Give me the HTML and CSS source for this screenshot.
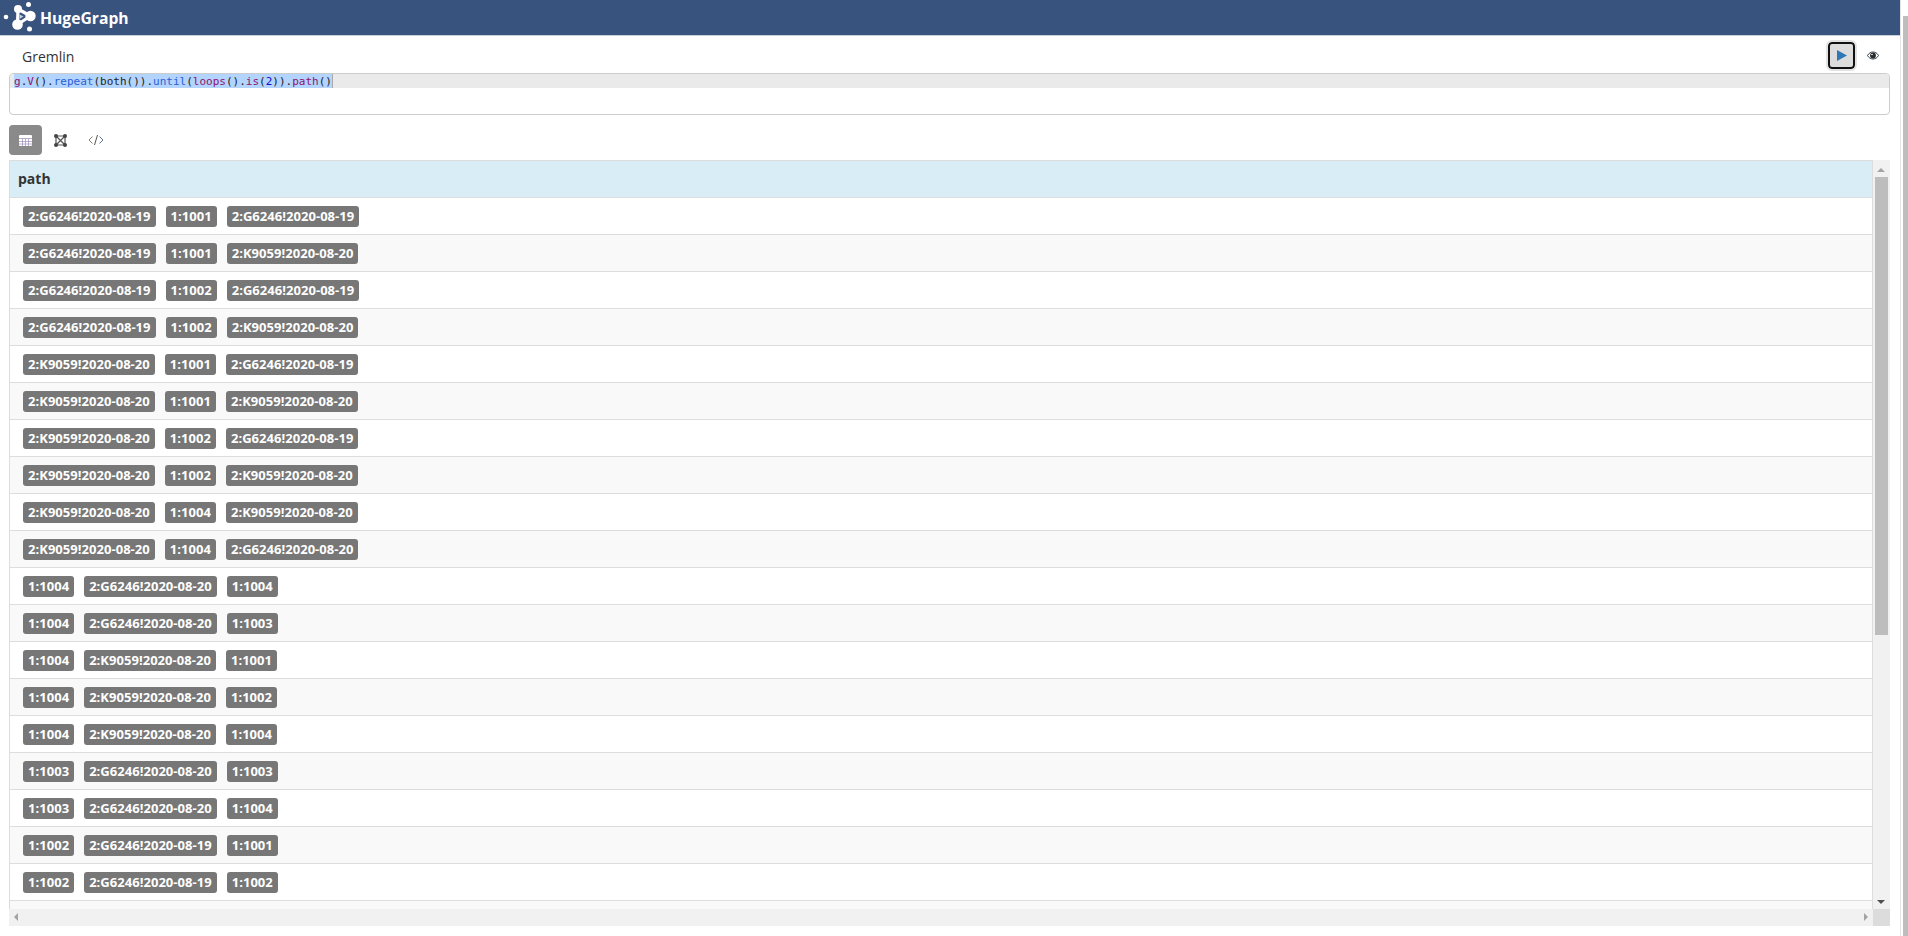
FILE: index.html
```html
<!DOCTYPE html>
<html lang="en">
<head>
<meta charset="utf-8">
<title>HugeGraph</title>
<link rel="stylesheet" href="styles.css">
</head>
<body>
<div class="page">
  <div class="main">
    <header class="topbar">
      <svg class="logo" viewBox="0 0 36 36" width="36" height="36">
        <g fill="#fff"><circle cx="4" cy="17" r="2.3"/><circle cx="15.500" cy="24.500" r="5.300"/><circle cx="26.500" cy="4.500" r="2.500"/><circle cx="28.500" cy="16" r="5.200"/><circle cx="27.500" cy="29" r="2.500"/><circle cx="16" cy="9" r="4"/></g>
        <path d="M16 9L28.500 16 15.500 24.500z" fill="none" stroke="#fff" stroke-width="3.200" stroke-linejoin="round"/>
        <path d="M17.500 14.500l4 2-4 2.500z" fill="#c8d0de"/>
      </svg>
      <span class="brand">HugeGraph</span>
    </header>
    <section class="query">
      <div class="query-head">
        <span class="query-title">Gremlin</span>
        <div class="query-actions">
          <button class="run"><svg viewBox="0 0 10 11" width="10" height="11"><path d="M0 0v11L10 5.500z" fill="#2d78b5"/></svg></button>
          <svg class="eye" viewBox="0 0 12 9" width="12" height="9"><path d="M.5 4.500C2 2 3.800 1 6 1s4 1 5.500 3.500C10 7 8.200 8 6 8S2 7 .5 4.500z" fill="#fff" stroke="#345" stroke-width="1"/><circle cx="6" cy="4.500" r="2.900" fill="#2a2a2a"/><circle cx="5" cy="3.500" r=".8" fill="#fff"/></svg>
        </div>
      </div>
      <div class="editor">
        <div class="code-line"><span class="sel"><span class="v">g</span>.<span class="v">V</span>().<span class="f">repeat</span>(both()).<span class="f">until</span>(<span class="v">loops</span>().<span class="v">is</span>(<span class="n">2</span>)).<span class="v">path</span>()</span><span class="cursor"></span></div>
      </div>
    </section>
    <nav class="tabs">
      <button class="tab active"><svg viewBox="0 0 13 11" width="13" height="11"><rect width="13" height="11" rx="1" fill="#fff"/><path d="M0 3.500h13M0 6.500h13M0 9h13M3.500 3v8M6.500 3v8M9.500 3v8" stroke="#a89cc0" stroke-width=".8"/></svg></button>
      <button class="tab"><svg viewBox="0 0 13 13" width="13" height="13"><g fill="none" stroke="#555"><path d="M2 2h9v9H2z" stroke-width="1.200"/><path d="M2 2l9 9M11 2l-9 9" stroke-width="1.300"/></g><g fill="#444"><circle cx="2" cy="2" r="2"/><circle cx="11" cy="2" r="2"/><circle cx="2" cy="11" r="2"/><circle cx="11" cy="11" r="2"/></g></svg></button>
      <button class="tab"><svg viewBox="0 0 16 12" width="16" height="12" fill="none" stroke-width="1"><path d="M4.500 2.500L1 6l3.500 3.500" stroke="#8a7a66"/><path d="M11.500 2.500L15 6l-3.500 3.500" stroke="#5f6f90"/><path d="M9.500 1L6.500 11" stroke="#555"/></svg></button>
    </nav>
    <section class="result">
      <div class="result-body">
        <div class="result-view">
          <div class="th">path</div>
          <div class="tr"><span class="label">2:G6246!2020-08-19</span><span class="label">1:1001</span><span class="label">2:G6246!2020-08-19</span></div>
          <div class="tr"><span class="label">2:G6246!2020-08-19</span><span class="label">1:1001</span><span class="label">2:K9059!2020-08-20</span></div>
          <div class="tr"><span class="label">2:G6246!2020-08-19</span><span class="label">1:1002</span><span class="label">2:G6246!2020-08-19</span></div>
          <div class="tr"><span class="label">2:G6246!2020-08-19</span><span class="label">1:1002</span><span class="label">2:K9059!2020-08-20</span></div>
          <div class="tr"><span class="label">2:K9059!2020-08-20</span><span class="label">1:1001</span><span class="label">2:G6246!2020-08-19</span></div>
          <div class="tr"><span class="label">2:K9059!2020-08-20</span><span class="label">1:1001</span><span class="label">2:K9059!2020-08-20</span></div>
          <div class="tr"><span class="label">2:K9059!2020-08-20</span><span class="label">1:1002</span><span class="label">2:G6246!2020-08-19</span></div>
          <div class="tr"><span class="label">2:K9059!2020-08-20</span><span class="label">1:1002</span><span class="label">2:K9059!2020-08-20</span></div>
          <div class="tr"><span class="label">2:K9059!2020-08-20</span><span class="label">1:1004</span><span class="label">2:K9059!2020-08-20</span></div>
          <div class="tr"><span class="label">2:K9059!2020-08-20</span><span class="label">1:1004</span><span class="label">2:G6246!2020-08-20</span></div>
          <div class="tr"><span class="label">1:1004</span><span class="label">2:G6246!2020-08-20</span><span class="label">1:1004</span></div>
          <div class="tr"><span class="label">1:1004</span><span class="label">2:G6246!2020-08-20</span><span class="label">1:1003</span></div>
          <div class="tr"><span class="label">1:1004</span><span class="label">2:K9059!2020-08-20</span><span class="label">1:1001</span></div>
          <div class="tr"><span class="label">1:1004</span><span class="label">2:K9059!2020-08-20</span><span class="label">1:1002</span></div>
          <div class="tr"><span class="label">1:1004</span><span class="label">2:K9059!2020-08-20</span><span class="label">1:1004</span></div>
          <div class="tr"><span class="label">1:1003</span><span class="label">2:G6246!2020-08-20</span><span class="label">1:1003</span></div>
          <div class="tr"><span class="label">1:1003</span><span class="label">2:G6246!2020-08-20</span><span class="label">1:1004</span></div>
          <div class="tr"><span class="label">1:1002</span><span class="label">2:G6246!2020-08-19</span><span class="label">1:1001</span></div>
          <div class="tr"><span class="label">1:1002</span><span class="label">2:G6246!2020-08-19</span><span class="label">1:1002</span></div>
          <div class="tr"></div>
        </div>
        <div class="vbar"><span class="arrow up"></span><span class="vthumb"></span><span class="arrow down"></span></div>
      </div>
      <div class="hbar"><div class="htrack"><span class="arrow left"></span><span class="arrow right"></span></div><div class="corner"></div></div>
    </section>
  </div>
  <div class="pagebar"><span class="pagethumb"></span></div>
</div>
</body>
</html>
```
FILE: styles.css
```css
* { box-sizing: border-box; }
html, body { margin: 0; height: 100%; overflow: hidden; background: #fff; }
body { font-family: "Open Sans", sans-serif; color: #333; }
.page { display: flex; height: 936px; }
.main { width: 1901px; display: flex; flex-direction: column; border-right: 1px solid #e4e4e4; }
.topbar { height: 36px; background: #39537f; display: flex; align-items: center; flex: none; border-bottom: 1px solid #c9d0dc; }
.logo { margin-left: 2px; flex: none; }
.brand { margin-left: 2px; color: #fff; font-weight: 700; font-size: 15.700px; }
.query { padding: 0 10px 0 9px; flex: none; }
.query-head { height: 37px; padding-top: 2px; display: flex; align-items: center; justify-content: space-between; }
.query-title { margin: 1px 0 0 13px; font-size: 14px; }
.query-actions { display: flex; align-items: center; margin-right: 11px; gap: 12px; }
.run { width: 27px; height: 27px; padding: 0; border: 2.500px solid #111; border-radius: 4px; background: #ddd; outline: 2px solid #e3e3e3; display: flex; align-items: center; justify-content: center; }
.eye { flex: none; }
.editor { height: 42px; border: 1px solid #ccc; border-radius: 4px; overflow: hidden; }
.code-line { height: 14px; background: #eaeaea; font-family: "DejaVu Sans Mono", monospace; font-size: 11px; line-height: 15px; padding-left: 4px; display: flex; color: #222; }
.sel { background: #b3d4fc; white-space: pre; }
.cursor { width: 1px; background: #aaa; }
.v { color: #90126d; }
.f { color: #2c5fd8; }
.n { color: #11c; }
.tabs { flex: none; padding: 10px 9px 5px; display: flex; align-items: center; gap: 2px; }
.tab { width: 33px; height: 30px; padding: 0; background: none; border: 0; border-radius: 4px; display: flex; align-items: center; justify-content: center; }
.tab.active { background: #8a8a8a; }
.result { margin: 0 10px 0 9px; flex: none; height: 766px; display: flex; flex-direction: column; }
.result-body { display: flex; height: 749px; }
.result-view { flex: 1; min-width: 0; overflow: hidden; border-left: 1px solid #ddd; border-top: 1px solid #ddd; border-right: 1px solid #ddd; }
.th { height: 37px; background: #d9edf7; border-bottom: 1px solid #ddd; font-weight: 700; font-size: 14px; padding-left: 8px; line-height: 36px; }
.tr { height: 37px; border-bottom: 1px solid #ddd; display: flex; align-items: center; padding-left: 13px; gap: 10px; }
.tr:nth-child(odd) { background: #f9f9f9; }
.label { height: 21px; background: #777; color: #fff; font-weight: 700; font-size: 13px; letter-spacing: .04px; border-radius: 3px; padding: 0 5px; line-height: 21px; white-space: nowrap; }
.vbar { width: 17px; flex: none; background: #f1f1f1; position: relative; }
.vthumb { position: absolute; left: 2px; right: 2px; top: 17px; height: 458px; background: #bdbdbd; }
.arrow { position: absolute; width: 0; height: 0; border: 4px solid transparent; }
.up { top: 8px; left: 4px; border-top: 0; border-bottom: 4px solid #a3a3a3; }
.down { bottom: 5px; left: 4px; border-bottom: 0; border-top: 4px solid #505050; }
.hbar { display: flex; height: 17px; flex: none; }
.htrack { flex: 1; background: #f1f1f1; position: relative; }
.left { left: 5px; top: 4px; border-left: 0; border-right: 4px solid #a3a3a3; }
.right { right: 5px; top: 4px; border-right: 0; border-left: 4px solid #a3a3a3; }
.corner { width: 17px; background: #dcdcdc; }
.pagebar { flex: 1; position: relative; background: #fff; }
.pagethumb { position: absolute; left: 2px; right: 0; top: 16px; bottom: 0; background: #bdbdbd; }
```
